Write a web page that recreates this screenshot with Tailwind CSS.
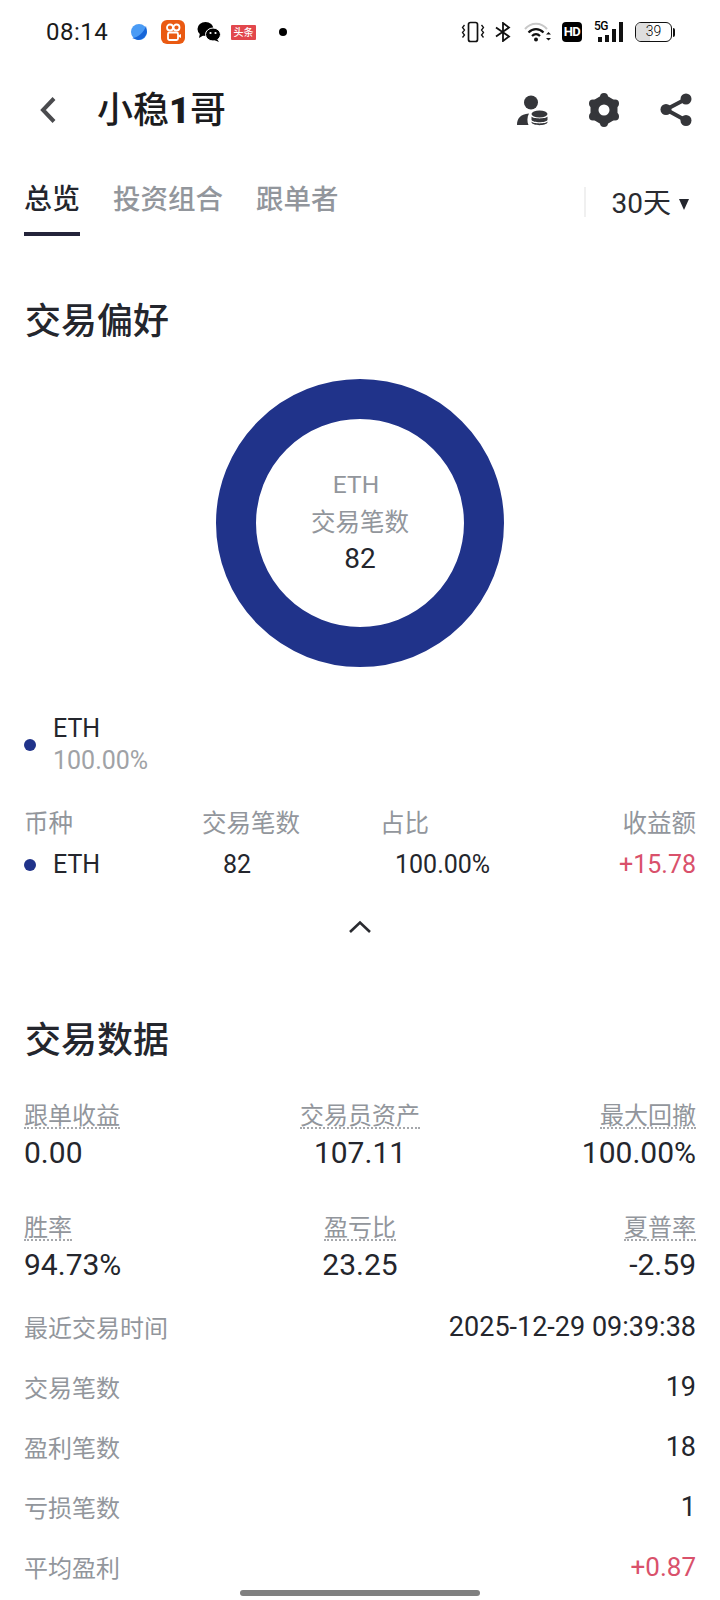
<!DOCTYPE html>
<html lang="zh-CN">
<head>
    <meta charset="UTF-8">
    <meta name="viewport" content="width=device-width, initial-scale=1.0">
    <title>小稳1哥</title>
    <script src="https://cdn.jsdelivr.net/npm/@tailwindcss/browser@4"></script>
</head>
<body class="bg-white font-['Roboto','Noto_Sans_CJK_SC',sans-serif] text-[#24262d]">
<div class="relative w-[720px] h-[1600px] overflow-hidden">

    <!-- Status bar -->
    <div class="h-[64px] flex items-center pl-[46px] text-black">
        <span class="w-[84px] text-[24px] leading-[30px] tracking-[0.5px] text-[#1a1a1a]">08:14</span>
        <svg class="w-[18px] h-[18px]" viewBox="0 0 18 18"><circle cx="9" cy="9" r="8" fill="#4a9bf5"/><path d="M2 15 C8 15 14 9 16 3 L17 9 C16 14 12 17 8 17 Z" fill="#1766d8"/></svg>
        <svg class="w-[24px] h-[24px] ml-[13px]" viewBox="0 0 24 24"><rect width="24" height="24" rx="6" fill="#ea5a12"/><circle cx="9" cy="7.5" r="3" fill="none" stroke="#fff" stroke-width="1.8"/><circle cx="15.5" cy="7.5" r="3" fill="none" stroke="#fff" stroke-width="1.8"/><rect x="7" y="12.5" width="10" height="7.5" rx="1.5" fill="none" stroke="#fff" stroke-width="1.8"/><path d="M17 15.5l3-1.5v4l-3-1.5z" fill="#fff"/></svg>
        <svg class="w-[24px] h-[22px] ml-[12px]" viewBox="0 0 24 22"><ellipse cx="8.5" cy="8" rx="8" ry="7"/><path d="M3 12l-1 5 5-3z"/><ellipse cx="16" cy="13.5" rx="7.5" ry="6.5" stroke="#fff" stroke-width="1"/><path d="M20 18l2 3-5-2z"/><circle cx="13.5" cy="12" r="1.1" fill="#fff"/><circle cx="18.5" cy="12" r="1.1" fill="#fff"/></svg>
        <span class="w-[25px] h-[15px] ml-[10px] bg-[#e2474c] text-white text-[10px] leading-[15px] text-center font-medium rounded-[1px]">头条</span>
        <span class="w-[8px] h-[8px] ml-[23px] rounded-full bg-black"></span>

        <svg class="w-[24px] h-[22px] ml-[174px]" viewBox="0 0 24 22" fill="none" stroke="#111" stroke-width="1.7"><rect x="7.5" y="1.5" width="9" height="19" rx="2"/><path d="M3.5 4 L1.5 6.5 L3.5 9 L1.5 11.5 L3.5 14 L1.5 16.5 M20.5 4 L22.5 6.5 L20.5 9 L22.5 11.5 L20.5 14 L22.5 16.5" stroke-width="1.3"/></svg>
        <svg class="w-[16px] h-[20px] ml-[10px]" viewBox="0 0 16 20" fill="none" stroke="#111" stroke-width="1.8"><path d="M1 5.5 L14 14.5 L8 19 V1 L14 5.5 L1 14.5"/></svg>
        <svg class="w-[28px] h-[22px] ml-[13px]" viewBox="0 0 28 22" fill="none"><path d="M1 8 C7 1 17 1 23 8" stroke="#c8c8c8" stroke-width="2"/><path d="M4.5 11.5 C9 7 15 7 19.5 11.5" stroke="#111" stroke-width="2.2"/><path d="M8 15 C10.5 12.5 13.5 12.5 16 15" stroke="#111" stroke-width="2.2"/><circle cx="12" cy="18.5" r="2" fill="#111"/><path d="M22 13.5l2.5-2.5 2.5 2.5zM22 17l2.5 2.5 2.5-2.5z" fill="#111"/></svg>
        <span class="w-[20px] h-[20px] ml-[10px] bg-black rounded-[4px] text-white text-[13px] leading-[20px] font-bold text-center tracking-[-0.5px]">HD</span>
        <div class="relative w-[30px] h-[20px] ml-[12px]">
            <span class="absolute left-0 top-[-3px] text-[12px] leading-[14px] font-medium tracking-[-0.5px]">5G</span>
            <span class="absolute left-[4px] bottom-0 w-[4px] h-[5px] bg-[#111]"></span>
            <span class="absolute left-[11px] bottom-0 w-[4px] h-[7px] bg-[#111]"></span>
            <span class="absolute left-[18px] bottom-0 w-[4px] h-[13px] bg-[#111]"></span>
            <span class="absolute left-[25px] bottom-0 w-[4px] h-[20px] bg-[#111]"></span>
        </div>
        <div class="relative w-[37px] h-[20px] ml-[11px] border-[1.5px] border-[#111] rounded-[6px] overflow-hidden">
            <span class="absolute left-0 top-0 bottom-0 w-[14px] bg-[#dedede]"></span>
            <span class="absolute inset-0 text-center text-[14px] leading-[17px] font-light">39</span>
        </div>
        <span class="w-[2px] h-[9px] ml-[1px] bg-[#111] rounded-r-[2px]"></span>
    </div>

    <!-- Nav bar -->
    <div class="h-[92px] flex items-center">
        <svg class="w-[18px] h-[28px] ml-[39px]" viewBox="0 0 18 28" fill="none" stroke="#4a4b4e" stroke-width="4"><path d="M15 2.5 L4 14 L15 25.5"/></svg>
        <h1 class="ml-[40px] w-[420px] pt-[2px] text-[36px] leading-[44px] font-medium text-[#1c1c1e]">小稳<span class="font-black">1</span>哥</h1>
        <svg class="w-[32px] h-[32px]" viewBox="0 0 32 32" fill="#35363a"><circle cx="14" cy="8.5" r="7"/><path d="M0 31 C0 25 3 20 12 19.5 C10 23 10 28 11.5 31 Z"/><ellipse cx="22.5" cy="20" rx="8" ry="3.5"/><path d="M14.5 22.5 C16 25 29 25 30.5 22.5 V26 C29 29 16 29 14.5 26 Z"/><path d="M14.5 27.5 C16 30 29 30 30.5 27.5 V28.5 C29 32 16 32 14.5 28.5 Z"/></svg>
        <svg class="w-[32px] h-[34px] ml-[39px]" viewBox="0 0 32 34" fill="#35363a"><path d="M16 4 L27 10.5 V23.5 L16 30 L5 23.5 V10.5 Z" stroke="#35363a" stroke-width="5" stroke-linejoin="round"/><circle cx="16" cy="4" r="4"/><circle cx="16" cy="30" r="4"/><circle cx="27" cy="10.5" r="4"/><circle cx="5" cy="10.5" r="4"/><circle cx="27" cy="23.5" r="4"/><circle cx="5" cy="23.5" r="4"/><circle cx="16" cy="17" r="5.5" fill="#fff"/></svg>
        <svg class="w-[32px] h-[34px] ml-[40px]" viewBox="0 0 32 34" fill="#35363a"><path d="M26 6 L6 16.5 L26 27.5" fill="none" stroke="#35363a" stroke-width="4"/><circle cx="26" cy="6" r="5.5"/><circle cx="6" cy="16.5" r="5.5"/><circle cx="26" cy="27.5" r="5.5"/></svg>
    </div>

    <!-- Tabs -->
    <div class="relative h-[80px] flex pl-[24px]">
        <div class="w-[56px] h-[80px] pt-[30px] border-b-4 border-[#24243a] text-[28px] leading-[28px] font-medium text-[#24262d]">总览</div>
        <div class="ml-[33px] pt-[30px] text-[27.5px] leading-[28px] font-medium text-[#92969c]">投资组合</div>
        <div class="ml-[33px] pt-[30px] text-[27.5px] leading-[28px] font-medium text-[#92969c]">跟单者</div>
        <div class="ml-auto mr-[30px] mt-[31px] h-[30px] pl-[26px] flex items-center border-l-2 border-[#f0f0f0]">
            <span class="relative top-[2px] text-[28px] leading-[30px] text-[#2a2b30]">30天</span>
            <svg class="relative top-[2px] w-[12px] h-[11px] ml-[7px]" viewBox="0 0 12 11" fill="#24262d"><path d="M1 0 H11 L6 11 Z"/></svg>
        </div>
    </div>

    <!-- Trading preference -->
    <h2 class="mt-[62px] ml-[25px] text-[36px] leading-[48px] font-medium">交易偏好</h2>
    <div class="mt-[33px] mx-auto w-[288px] h-[288px] rounded-full border-[40px] border-[#20338a] flex flex-col items-center">
        <span class="mt-[50px] mr-[8px] text-[24.5px] leading-[32px] text-[#92969c]">ETH</span>
        <span class="mt-[6px] text-[24.5px] leading-[32px] text-[#92969c]">交易笔数</span>
        <span class="mt-[4px] text-[28px] leading-[32px] text-[#24262d]">82</span>
    </div>

    <div class="mt-[46px] flex items-center pl-[24px]">
        <span class="w-[12px] h-[12px] rounded-full bg-[#20338a]"></span>
        <div class="ml-[17px]">
            <div class="text-[25px] leading-[32px] text-[#24262d]">ETH</div>
            <div class="text-[25px] leading-[32px] text-[#a0a2a6]">100.00%</div>
        </div>
    </div>

    <div class="mt-[31px] mx-[24px] grid grid-cols-[178px_178px_1fr_auto] text-[24.5px] leading-[32px] text-[#92969c]">
        <span>币种</span><span>交易笔数</span><span>占比</span><span class="text-right">收益额</span>
    </div>
    <div class="mt-[9px] mx-[24px] grid grid-cols-[178px_178px_1fr_auto] text-[25px] leading-[32px] text-[#24262d]">
        <span class="flex items-center"><span class="w-[12px] h-[12px] mr-[17px] rounded-full bg-[#20338a]"></span>ETH</span>
        <span class="pl-[21px]">82</span>
        <span class="pl-[15px]">100.00%</span>
        <span class="text-right text-[#d9516b]">+15.78</span>
    </div>
    <svg class="mt-[39px] mx-auto w-[24px] h-[14px] block" viewBox="0 0 24 14" fill="none" stroke="#2a2b30" stroke-width="2.6"><path d="M2 12 L12 2.5 L22 12"/></svg>

    <!-- Trading data -->
    <h2 class="mt-[83px] ml-[25px] text-[36px] leading-[48px] font-medium">交易数据</h2>
    <div class="mt-[36px] mx-[24px] grid grid-cols-3 text-[24px]">
        <div>
            <div class="w-fit h-[28px] leading-[31px] border-b-2 border-dotted border-[#a6a8ac] text-[#92969c]">跟单收益</div>
            <div class="mt-[8px] text-[30px] leading-[32px]">0.00</div>
        </div>
        <div class="flex flex-col items-center">
            <div class="w-fit h-[28px] leading-[31px] border-b-2 border-dotted border-[#a6a8ac] text-[#92969c]">交易员资产</div>
            <div class="mt-[8px] text-[30px] leading-[32px]">107.11</div>
        </div>
        <div class="flex flex-col items-end">
            <div class="w-fit h-[28px] leading-[31px] border-b-2 border-dotted border-[#a6a8ac] text-[#92969c]">最大回撤</div>
            <div class="mt-[8px] text-[30px] leading-[32px]">100.00%</div>
        </div>
    </div>
    <div class="mt-[44px] mx-[24px] grid grid-cols-3 text-[24px]">
        <div>
            <div class="w-fit h-[28px] leading-[31px] border-b-2 border-dotted border-[#a6a8ac] text-[#92969c]">胜率</div>
            <div class="mt-[8px] text-[30px] leading-[32px]">94.73%</div>
        </div>
        <div class="flex flex-col items-center">
            <div class="w-fit h-[28px] leading-[31px] border-b-2 border-dotted border-[#a6a8ac] text-[#92969c]">盈亏比</div>
            <div class="mt-[8px] text-[30px] leading-[32px]">23.25</div>
        </div>
        <div class="flex flex-col items-end">
            <div class="w-fit h-[28px] leading-[31px] border-b-2 border-dotted border-[#a6a8ac] text-[#92969c]">夏普率</div>
            <div class="mt-[8px] text-[30px] leading-[32px]">-2.59</div>
        </div>
    </div>

    <div class="mt-[18px] mx-[24px] flex flex-col text-[24px] leading-[60px] text-[#92969c]">
        <div class="h-[60px] flex justify-between"><span>最近交易时间</span><span class="text-[27px] leading-[56px] text-[#24262d]">2025-12-29 09:39:38</span></div>
        <div class="h-[60px] flex justify-between"><span>交易笔数</span><span class="text-[27px] leading-[56px] text-[#24262d]">19</span></div>
        <div class="h-[60px] flex justify-between"><span>盈利笔数</span><span class="text-[27px] leading-[56px] text-[#24262d]">18</span></div>
        <div class="h-[60px] flex justify-between"><span>亏损笔数</span><span class="text-[27px] leading-[56px] text-[#24262d]">1</span></div>
        <div class="h-[60px] flex justify-between"><span>平均盈利</span><span class="text-[26px] leading-[56px] text-[#d9516b]">+0.87</span></div>
    </div>

    <!-- Home indicator -->
    <div class="absolute bottom-[4px] left-[240px] w-[240px] h-[6px] rounded-full bg-[#808080]"></div>
</div>
</body>
</html>
